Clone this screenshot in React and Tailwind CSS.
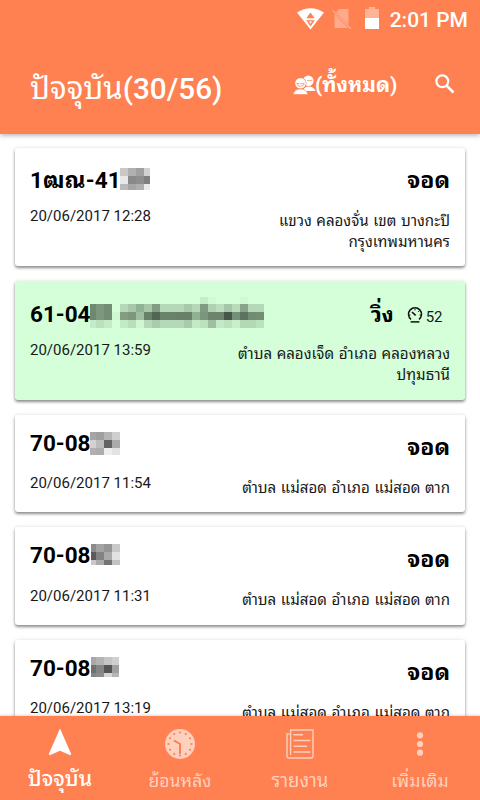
import React from "react";

function Mosaic({ className, xs, ys, rows }) {
  const w = xs[xs.length - 1];
  const h = ys[ys.length - 1];
  return (
    <svg className={className} width={w} height={h} viewBox={`0 0 ${w} ${h}`} shapeRendering="crispEdges" aria-hidden="true">
      {rows.map((row, r) =>
        row.split(" ").map((c, i) =>
          c === "-" ? null : (
            <rect key={r + "-" + i} x={xs[i]} y={ys[r]} width={xs[i + 1] - xs[i]} height={ys[r + 1] - ys[r]} fill={"#" + c} />
          )
        )
      )}
    </svg>
  );
}

function StatusBar() {
  return (
    <div className="flex h-10 items-start justify-end pr-3 text-white">
      <svg className="mt-[8px] mr-[8px]" width="27" height="22" viewBox="0 0 27 22">
        <path d="M0 4.6Q13.5-4.2 27 4.6L13.5 21.5Z" fill="#fff" />
        <path d="M9.3 10.3L13.5 4.6L17.7 10.3Z M9.3 12.3H17.7L13.5 18.4Z" fill="#ff8050" />
        <path d="M11.9 13.5H15.1L13.5 15.8Z" fill="#fff" />
      </svg>
      <svg className="mt-[8px] mr-[13px]" width="20" height="22" viewBox="0 0 20 22">
        <path d="M7 1H16.5V16.8L4 4Z M2.5 6L16 20H2.5Z" fill="#ffaa8a" />
        <path d="M.7 2.5L18.8 20.8" stroke="#ffaa8a" strokeWidth="1.6" />
      </svg>
      <svg className="mt-[7px] mr-[11px]" width="14" height="22" viewBox="0 0 14 22">
        <path d="M0 2H4V0H10V2H14V11H0Z" fill="#ffb397" />
        <path d="M0 11H14V22H0Z" fill="#fff" />
      </svg>
      <span className="mt-[7px] text-[21px] leading-[26px] font-medium whitespace-nowrap">2:01 PM</span>
    </div>
  );
}

function PeopleIcon() {
  return (
    <svg width="23" height="20" viewBox="0 0 23 20" fill="#fff">
      <circle cx="15.3" cy="5.7" r="5.3" />
      <path d="M10 16C11 12.8 13 11.6 15.5 11.6S21.5 13 22.5 16Z" />
      <circle cx="7.5" cy="8.3" r="5.9" fill="#ff8050" />
      <circle cx="7.5" cy="8.3" r="5.3" />
      <path d="M0 19.5C.8 15.8 3.8 14 7.5 14S14.2 15.8 15 19.5Z" stroke="#ff8050" strokeWidth=".6" />
      <path d="M3.8 8.4Q7.5 9.4 11.2 8.4Q10.8 11.4 7.5 11.4T3.8 8.4Z" fill="#fff" stroke="#ff8050" strokeWidth=".7" />
      <path d="M14 5.6Q17 6 19.3 5.2" fill="none" stroke="#ff8050" strokeWidth=".7" />
    </svg>
  );
}

function Header() {
  return (
    <header className="relative z-10 h-[134px] shrink-0 bg-[#ff8050] text-white shadow-[0_1px_5px_rgba(0,0,0,0.35)]">
      <StatusBar />
      <div className="flex h-[94px] items-start pl-[30px]">
        <h1 className="mt-[29px] w-[263px] text-[29.7px] leading-[40px] font-medium whitespace-nowrap"><span className="text-[31px] font-normal">ปัจจุบัน</span>(30/56)</h1>
        <div className="mt-[35px] flex">
          <PeopleIcon />
          <span className="-mt-[5px] -ml-px text-[20.8px] leading-[30px] font-bold whitespace-nowrap">(ทั้งหมด)</span>
        </div>
        <svg className="mt-[34px] mr-[25px] ml-auto" width="20" height="20" viewBox="0 0 20 20" fill="none" stroke="#fff" strokeWidth="2.2">
          <circle cx="7.3" cy="7.3" r="5.9" />
          <path d="M11.6 11.6L18.5 18.5" strokeWidth="2.6" />
        </svg>
      </div>
    </header>
  );
}

function SpeedIcon() {
  return (
    <svg className="mt-[8px]" width="16" height="16" viewBox="0 0 16 16" fill="none" stroke="#101010">
      <path d="M4 12.4A6.5 6.5 0 1 1 12 12.4" strokeWidth="1.5" />
      <path d="M5 5L8.6 8.4" strokeWidth="1.6" />
      <path d="M8 2V3.4M12 4L11.2 4.8M14 8H12.6M2 8H3.4" strokeWidth="1" />
      <path d="M3.6 14.9H12.4" strokeWidth="1.5" />
    </svg>
  );
}

const grid3 = [0, 8, 16, 22];

const cards = [
  {
    plate: "1ฒณ-41", date: "20/06/2017 12:28", status: "จอด", lines: ["แขวง คลองจั่น เขต บางกะปิ", "กรุงเทพมหานคร"],
    mosaic: { xs: [0, 8, 16, 24, 30], ys: grid3, rows: ["c8c8c8 b0b0b0 a0a0a0 d2d2d2", "e8e8e8 898989 8e8e8e 7f7f7f", "b9b9b9 a6a6a6 afafaf eaeaea"] },
  },
  {
    plate: "61-04", date: "20/06/2017 13:59", status: "วิ่ง", speed: "52", green: true, lines: ["ตำบล คลองเจ็ด อำเภอ คลองหลวง", "ปทุมธานี"],
    mosaic: {
      xs: [0, 6, 14, 22, 30, 38, 46, 54, 62, 70, 78, 86, 94, 102, 110, 118, 126, 134, 142, 150, 158, 166, 174],
      ys: [0, 7, 15, 23, 31],
      rows: [
        "- - - - - - - - - - - - - - c6edc8 cffad2 - - - cefad2 - -",
        "708a72 7d977f 728d74 - b5d8b8 a7c8a9 91b294 a6c8a9 829d84 b5d8b8 b5d8b8 b5d8b8 a8caaa b5d8b8 809b82 b0d2b3 bbdebd a5c6a7 b8dbbb 88a48a b5d8b8 b5d8b8",
        "6e876f 7d977f 728d74 cff8d2 829d84 7d977f 9dbe9f 687f69 536655 6a816c 6a816c 687f69 687f69 91b193 7b967d 6c846e 6c846e 46574a 768f78 5d725f 728c74 748e76",
        "c4ebc7 bbe0be c4ebc7 - c4e9c6 b9debb cff7d2 b6dab9 aacbac b5d8b8 b5d8b8 b5d8b8 a9caab c4e9c6 bce1bf 9fbea2 c4e9c6 bce1bf c8efcb b4d7b6 b4d7b6 bce1bf",
      ],
    },
  },
  {
    plate: "70-08", date: "20/06/2017 11:54", status: "จอด", lines: ["ตำบล แม่สอด อำเภอ แม่สอด ตาก"],
    mosaic: { xs: [0, 6, 14, 22, 30], ys: [0, 8, 16, 23], rows: ["a5a5a5 9f9f9f b5b5b5 cfcfcf", "d2d2d2 bcbcbc 626262 aaaaaa", "b0b0b0 adadad eeeeee e2e2e2"] },
  },
  {
    plate: "70-08", date: "20/06/2017 11:31", status: "จอด", lines: ["ตำบล แม่สอด อำเภอ แม่สอด ตาก"],
    mosaic: { xs: [0, 5, 13, 21, 29], ys: [0, 8, 16, 21], rows: ["8b8b8b a3a3a3 959595 c9c9c9", "5b5b5b 838383 aaaaaa e2e2e2", "c8c8c8 aaaaaa 737373 c2c2c2"] },
  },
  {
    plate: "70-08", date: "20/06/2017 13:19", status: "จอด", lines: ["ตำบล แม่สอด อำเภอ แม่สอด ตาก"],
    mosaic: { xs: [0, 5, 13, 21, 28], ys: [0, 8, 16, 20], rows: ["a8a8a8 b3b3b3 c5c5c5 d0d0d0", "707070 858585 555555 a0a0a0", "858585 8c8c8c d5d5d5 b5b5b5"] },
  },
];

function Card({ card, height, plateWidth, plateTop, dateTop, mosaicTop }) {
  return (
    <article className={`flex ${height} shrink-0 justify-between rounded-[3px] px-[15px] text-black shadow-[0_2px_3px_rgba(0,0,0,0.42),0_0_4px_rgba(0,0,0,0.1)] ${card.green ? "bg-[#d4ffd8]" : "bg-white"}`}>
      <div className="flex flex-col">
        <div className={`flex h-[30px] ${plateTop}`}>
          <span className={`${plateWidth} text-[22.5px] leading-[30px] font-bold whitespace-nowrap`}>{card.plate}</span>
          <span className={`w-0 ${mosaicTop}`}>
            <Mosaic className="block max-w-none" {...card.mosaic} />
          </span>
        </div>
        <span className={`${dateTop} text-[15px] leading-[20px] whitespace-nowrap text-[#181818]`}>{card.date}</span>
      </div>
      <div className="flex flex-col items-end">
        <div className="mt-[18px] flex h-[30px]">
          <span className={`leading-[30px] font-bold whitespace-nowrap ${card.speed ? "mt-px text-[21.5px]" : "text-[23px]"}`}>{card.status}</span>
          {card.speed && (
            <span className="mr-[7.5px] ml-[13px] flex gap-[3px]">
              <SpeedIcon />
              <span className="mt-[8px] text-[15px] leading-[20px] text-[#181818]">{card.speed}</span>
            </span>
          )}
        </div>
        <div className="mt-[15px] text-right text-[15.1px] leading-[21px] [word-spacing:0.8px] whitespace-nowrap text-[#181818]">
          {card.lines.map((l) => <div key={l}>{l}</div>)}
        </div>
      </div>
    </article>
  );
}

function Tab({ label, active, children, size }) {
  return (
    <div className={`flex w-[120px] flex-col items-center ${active ? "text-white" : "text-[#ffd0be]"}`}>
      <div className="flex h-[56px] items-center justify-center">{children}</div>
      <span className={`leading-[26px] whitespace-nowrap ${size} ${active ? "-mt-[6px] font-medium" : "-mt-[4px]"}`}>{label}</span>
    </div>
  );
}

function TabBar() {
  const dots = Array.from({ length: 12 }, (_, i) => (i * Math.PI) / 6);
  return (
    <nav className="relative z-10 flex h-[84px] shrink-0 bg-[#ff8050] shadow-[0_-1px_2px_rgba(0,0,0,0.15)]">
      <Tab label="ปัจจุบัน" active size="text-[21.2px]">
        <svg className="-mt-[4px]" width="24" height="28" viewBox="0 0 24 28" fill="#fff">
          <path d="M12 .5L23.3 26.2L22.2 27.3L12 22.7L1.8 27.3L.7 26.2Z" />
        </svg>
      </Tab>
      <Tab label="ย้อนหลัง" size="text-[17.6px]">
        <svg width="30" height="30" viewBox="0 0 30 30">
          <circle cx="15" cy="15" r="15" fill="#ffd0be" />
          {dots.map((a) => <circle key={a} cx={15 + 11.5 * Math.sin(a)} cy={15 - 11.5 * Math.cos(a)} r="1.1" fill="#ff8050" />)}
          <path d="M8.8 11.3L15 15V25" fill="none" stroke="#ff8050" strokeWidth="2" />
        </svg>
      </Tab>
      <Tab label="รายงาน" size="text-[18.5px]">
        <svg width="28" height="30" viewBox="0 0 28 30" fill="none" stroke="#ffd0be" strokeWidth="1.4">
          <path d="M4.6 26V1H27V27Q27 29 25 29H3Q1 29 1 27V5H3.5" />
          <path d="M7.5 5.7H17M7.5 11.5H24.5M7.5 17.3H21M7.5 23H24.5" />
        </svg>
      </Tab>
      <Tab label="เพิ่มเติม" size="text-[17.6px]">
        <svg width="8" height="24" viewBox="0 0 8 24" fill="#ffd0be">
          <circle cx="4" cy="3.3" r="3.1" /><circle cx="4" cy="12" r="3.1" /><circle cx="4" cy="20.7" r="3.1" />
        </svg>
      </Tab>
    </nav>
  );
}

export default function App() {
  return (
    <div className="flex h-[800px] w-[480px] flex-col overflow-hidden bg-white font-['Roboto','Noto_Sans_Thai_Looped','Noto_Looped_Thai','Loma','Waree','Garuda','Noto_Sans_Thai','Noto_Sans',sans-serif]">
      <Header />
      <main className="flex h-[582px] flex-col gap-[15px] overflow-hidden px-[15px] pt-[14px]">
        <Card card={cards[0]} height="h-[118px]" plateWidth="w-[90px] tracking-[0.2px]" plateTop="mt-[17px]" dateTop="mt-[11px]" mosaicTop="mt-[3px]" />
        <Card card={cards[1]} height="h-[118.5px]" plateWidth="w-[60px]" plateTop="mt-[17.5px]" dateTop="mt-[11.5px]" mosaicTop="-mt-[1.5px]" />
        <Card card={cards[2]} height="h-[97.5px]" plateWidth="w-[60px]" plateTop="mt-[13px]" dateTop="mt-[15px]" mosaicTop="mt-[4px]" />
        <Card card={cards[3]} height="h-[97.5px]" plateWidth="w-[61px]" plateTop="mt-[13px]" dateTop="mt-[15.5px]" mosaicTop="mt-[4px]" />
        <Card card={cards[4]} height="h-[97.5px]" plateWidth="w-[61px]" plateTop="mt-[13px]" dateTop="mt-[15px]" mosaicTop="mt-[4px]" />
      </main>
      <TabBar />
    </div>
  );
}
